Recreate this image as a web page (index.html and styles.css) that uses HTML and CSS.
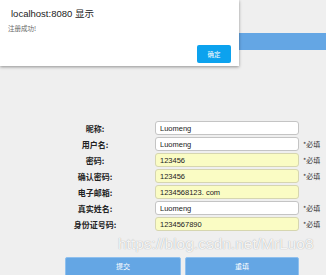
FILE: index.html
```html
<!DOCTYPE html>
<html lang="zh-CN">

<head>
  <meta charset="UTF-8">
  <meta name="viewport" content="width=device-width, initial-scale=1.0">
  <title>注册</title>
  <link rel="stylesheet" href="styles.css">
</head>

<body>
  <div class="topbar"></div>

  <form class="register">
    <div class="row">
      <label class="label">昵称:</label>
      <input class="field" type="text" value="Luomeng">
    </div>
    <div class="row">
      <label class="label">用户名:</label>
      <input class="field" type="text" value="Luomeng">
      <span class="req">*必填</span>
    </div>
    <div class="row">
      <label class="label">密码:</label>
      <input class="field filled" type="text" value="123456">
      <span class="req">*必填</span>
    </div>
    <div class="row">
      <label class="label">确认密码:</label>
      <input class="field filled" type="text" value="123456">
      <span class="req">*必填</span>
    </div>
    <div class="row">
      <label class="label">电子邮箱:</label>
      <input class="field filled" type="text" value="1234568123. com">
    </div>
    <div class="row">
      <label class="label">真实姓名:</label>
      <input class="field" type="text" value="Luomeng">
      <span class="req">*必填</span>
    </div>
    <div class="row">
      <label class="label">身份证号码:</label>
      <input class="field filled" type="text" value="1234567890">
      <span class="req">*必填</span>
    </div>

    <div class="actions">
      <button type="button" class="btn submit">提交</button>
      <button type="button" class="btn reset">重填</button>
    </div>
  </form>

  <!-- 浏览器 alert 弹窗 -->
  <div class="dialog">
    <p class="dialog-title">localhost:8080 显示</p>
    <p class="dialog-msg">注册成功!</p>
    <div class="dialog-foot">
      <button type="button" class="ok">确定</button>
    </div>
  </div>

  <div class="watermark">https://blog.csdn.net/MrLuo8</div>
</body>

</html>
```
FILE: styles.css
```css
body {
  margin: 0;
  background: #efefef;
  font-family: "Liberation Sans", "Noto Sans CJK SC", sans-serif;
  overflow: hidden;
}

.topbar {
  margin-top: 33px;
  height: 17px;
  background: #64a6e4;
}

.register {
  padding: 70px 0 0 65px;
}

.row {
  display: flex;
  align-items: center;
  height: 16px;
}

.label {
  width: 60px;
  margin-right: 30px;
  text-align: center;
  font-family: "Noto Sans CJK SC", serif;
  font-weight: bold;
  font-size: 8px;
  color: #222;
}

.field {
  box-sizing: border-box;
  width: 144px;
  height: 14px;
  margin: 0;
  padding: 0 4px;
  border: 1px solid #c4c4c4;
  border-radius: 3px;
  background: #fff;
  font-family: "Liberation Sans", sans-serif;
  font-size: 7.5px;
  color: #222;
}

.filled {
  background: #fafcc4;
  border-color: #d6d6b0;
}

.req {
  margin-left: 4px;
  font-family: "Noto Sans CJK SC", sans-serif;
  font-size: 7px;
  color: #333;
}

.actions {
  display: flex;
  gap: 4px;
  margin-top: 25px;
}

.btn {
  height: 24px;
  border: 1px solid #8fc0ee;
  border-radius: 2px;
  background: #64a6e4;
  color: #fff;
  font-family: "Noto Sans CJK SC", sans-serif;
  font-size: 7px;
  padding: 0 0 6px;
}

.submit {
  width: 116px;
}

.reset {
  width: 114px;
}

.dialog {
  position: absolute;
  top: 0;
  left: 0;
  width: 239px;
  height: 66px;
  background: #fff;
  box-shadow: 0 1px 3px rgba(0, 0, 0, 0.4);
}

.dialog p {
  margin: 0;
}

.dialog-title {
  padding: 8px 0 0 11px;
  font-size: 9.5px;
  color: #222;
  line-height: 12px;
}

.dialog-msg {
  padding: 4px 0 0 8px;
  font-family: "Noto Sans CJK SC", sans-serif;
  font-size: 6.5px;
  color: #666;
  line-height: 9px;
}

.dialog-foot {
  display: flex;
  justify-content: flex-end;
  padding: 12px 8px 0 0;
}

.ok {
  width: 34px;
  height: 18px;
  border: none;
  border-radius: 2px;
  background: #0ca2ee;
  color: #fff;
  font-family: "Noto Sans CJK SC", sans-serif;
  font-size: 6.5px;
  padding: 0;
}

.watermark {
  position: absolute;
  left: 118px;
  top: 235px;
  font-family: "Liberation Sans", sans-serif;
  font-size: 15.5px;
  color: rgba(255, 255, 255, 0.9);
  text-shadow: 0 0 1px #999;
  white-space: nowrap;
}
```
